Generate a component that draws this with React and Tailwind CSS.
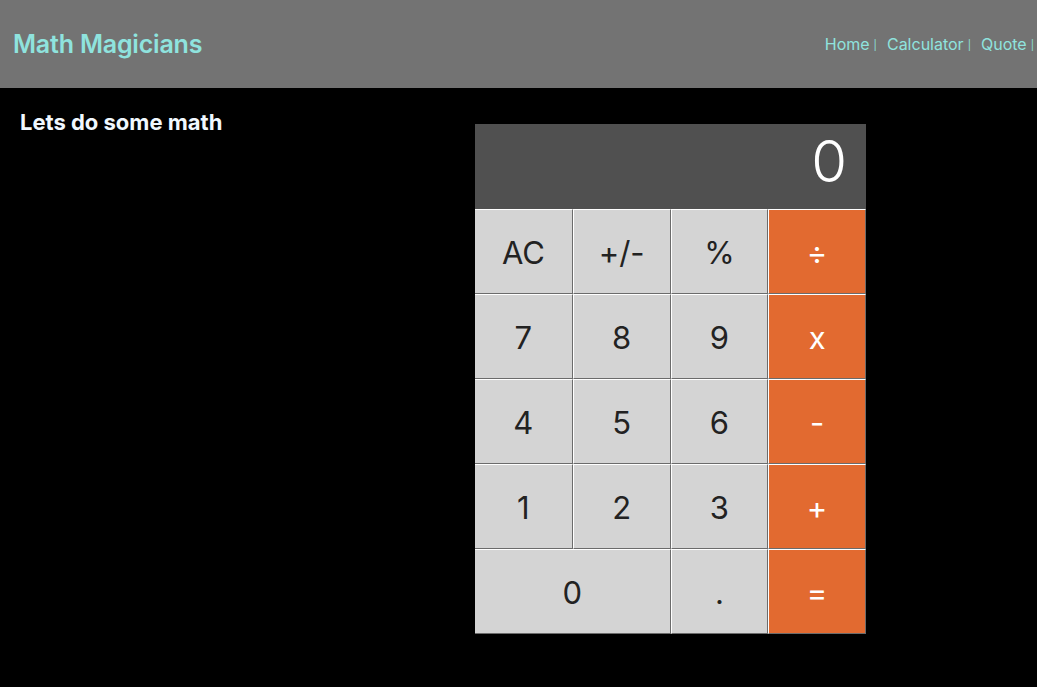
import React, { useState } from "react";

const keys = [
  { label: "AC" }, { label: "+/-" }, { label: "%" }, { label: "÷", op: true },
  { label: "7" }, { label: "8" }, { label: "9" }, { label: "x", op: true },
  { label: "4" }, { label: "5" }, { label: "6" }, { label: "-", op: true },
  { label: "1" }, { label: "2" }, { label: "3" }, { label: "+", op: true },
  { label: "0", wide: true }, { label: "." }, { label: "=", op: true }
];

export default function App() {
  const [display] = useState("0");
  const links = ["Home", "Calculator", "Quote"];

  return (
    <div className="min-h-screen bg-black" style={{ fontFamily: "Inter, 'Liberation Sans', sans-serif" }}>
      {/* Header */}
      <header className="h-[88px] bg-[#737373] flex items-center justify-between pl-[13px] pr-[3px]">
        <h1 className="text-[25px] font-semibold text-[#8fe3de] tracking-[-0.2px] pt-[2px]">Math Magicians</h1>
        <nav className="flex items-center gap-[10px] text-[16px] text-[#8fe3de]">
          {links.map(link => (
            <span key={link} className="flex items-center">
              <a href="#">{link}</a>
              <span className="text-[10px] ml-[4px] mt-[3px]">|</span>
            </span>
          ))}
        </nav>
      </header>

      {/* Body */}
      <div className="flex pl-5 pt-[20px]">
        <h2 className="w-[455px] text-[22px] font-bold text-[#f0f8ff] leading-7">Lets do some math</h2>
        <div className="w-[391px] mt-[16px]">
          <div className="h-[85px] bg-[#505050] flex items-center justify-end pr-[19px] pb-[10px] text-white text-[58px] font-light">
            {display}
          </div>
          <div className="grid grid-cols-4">
            {keys.map((k, i) => (
              <button
                key={k.label}
                type="button"
                className={`h-[85px] text-[31px] pt-[3px] border-t border-t-white border-r border-b border-r-[#6b6b6b] border-b-[#6b6b6b] ${
                  i % 4 === 0 || k.label === "0" ? "" : "border-l border-l-white"
                } ${k.wide ? "col-span-2" : ""} ${
                  k.op ? "bg-[#e26a30] text-white" : "bg-[#d4d4d4] text-[#222]"
                }`}
              >
                {k.label}
              </button>
            ))}
          </div>
        </div>
      </div>
    </div>
  );
}
